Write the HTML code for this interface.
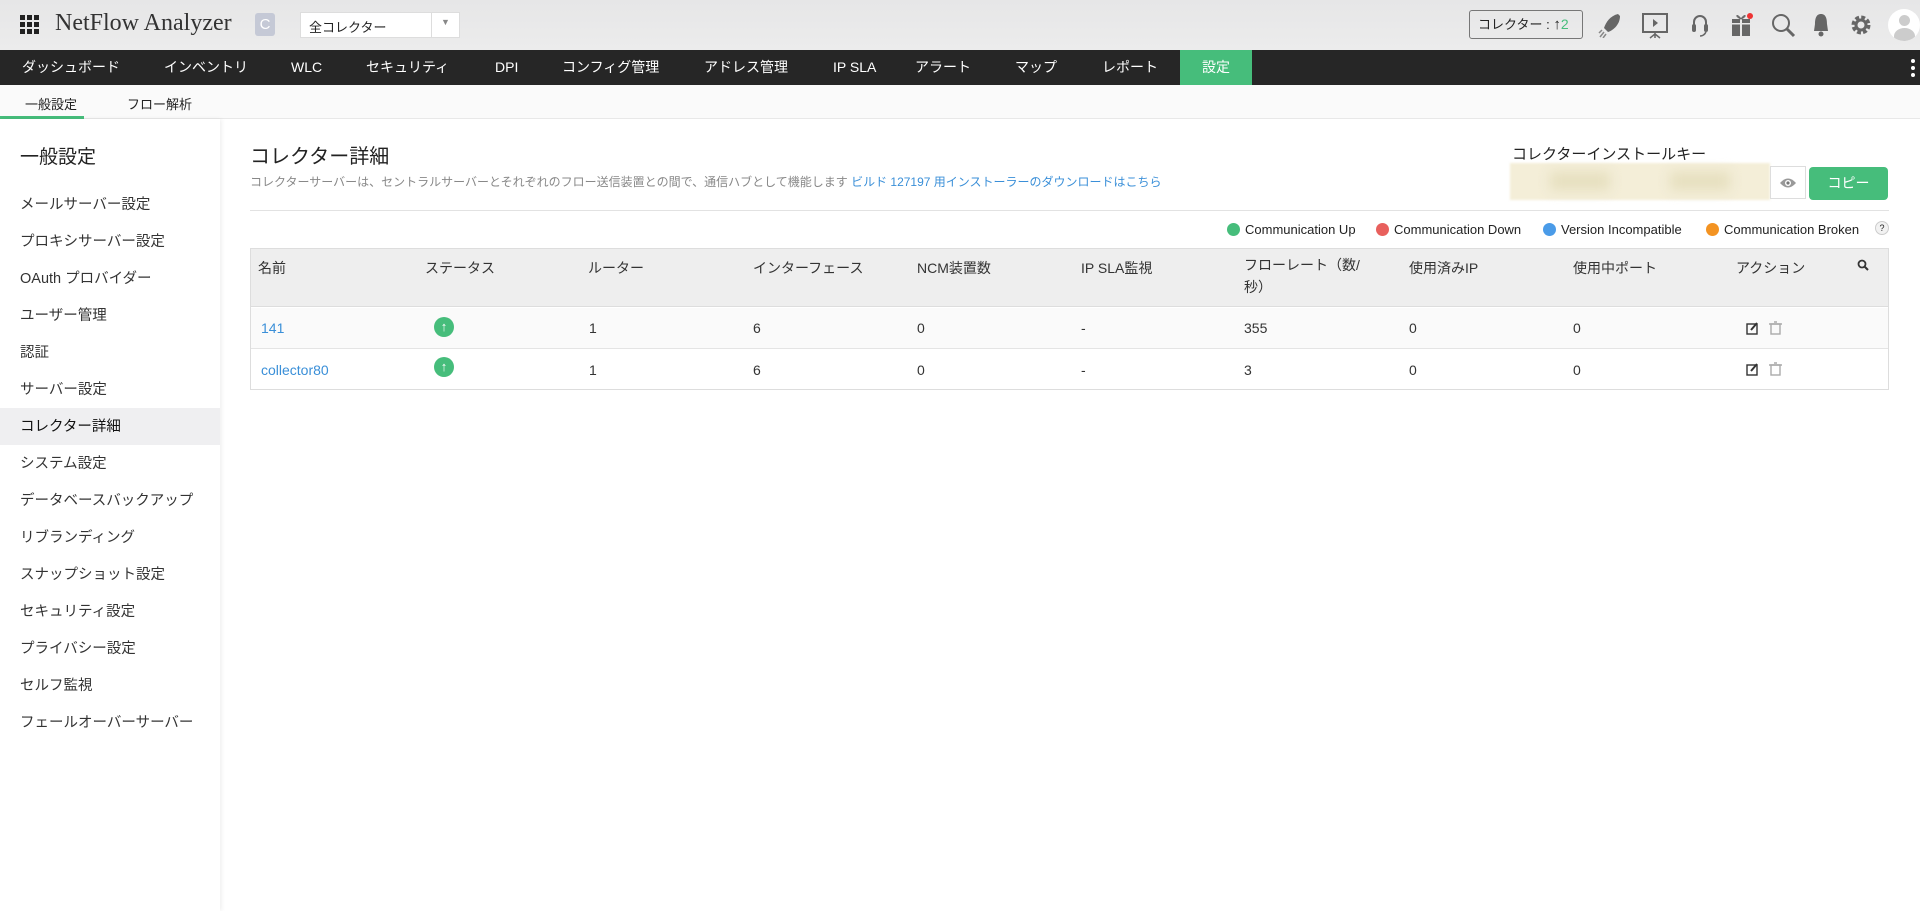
<!DOCTYPE html>
<html><head><meta charset="utf-8"><style>
*{box-sizing:border-box;margin:0;padding:0}
body{width:1920px;height:911px;overflow:hidden;background:#fff;font-family:"Liberation Sans","Noto Sans CJK JP",sans-serif;color:#222;position:relative}
.abs{position:absolute}
#top{left:0;top:0;width:1920px;height:50px;background:linear-gradient(#e6e6e7,#ececec)}
#nav{left:0;top:50px;width:1920px;height:35px;background:#262626}
#nav span{position:absolute;top:0;line-height:35px;color:#fff;font-size:14px;white-space:nowrap}
#sub{left:0;top:85px;width:1920px;height:34px;background:#fafafa;border-bottom:1px solid #e8e8e8}
#side{left:0;top:119px;width:220px;height:792px;background:#fff;box-shadow:2px 0 4px rgba(0,0,0,.06)}
.si{position:absolute;left:20px;font-size:14.5px;color:#333;white-space:nowrap}
.th{position:absolute;top:258px;font-size:14px;color:#333;white-space:nowrap}
.td{position:absolute;font-size:14px;color:#333;white-space:nowrap}
.up{position:absolute;width:20px;height:20px;border-radius:50%;background:#46bd7b;color:#fff;font-size:13px;font-weight:bold;text-align:center;line-height:20px}
.lg{position:absolute;top:222px;font-size:13px;color:#222;white-space:nowrap}
.dot{display:inline-block;width:13px;height:13px;border-radius:50%;vertical-align:-2px;margin-right:5px}
</style></head><body>
<div id="top" class="abs">
  <svg class="abs" style="left:20px;top:15px" width="20" height="20"><g fill="#222"><rect x="0" y="0" width="5" height="5"/><rect x="7" y="0" width="5" height="5"/><rect x="14" y="0" width="5" height="5"/><rect x="0" y="7" width="5" height="5"/><rect x="7" y="7" width="5" height="5"/><rect x="14" y="7" width="5" height="5"/><rect x="0" y="14" width="5" height="5"/><rect x="7" y="14" width="5" height="5"/><rect x="14" y="14" width="5" height="5"/></g></svg>
  <div class="abs" style="left:55px;top:10px;font-family:'Liberation Serif',serif;font-size:24px;color:#333">NetFlow Analyzer</div>
  <div class="abs" style="left:255px;top:13px;width:20px;height:23px;background:#c5c9d6;border-radius:3px;color:#fff;text-align:center;line-height:23px;font-size:15px">C</div>
  <div class="abs" style="left:300px;top:12px;width:160px;height:26px;background:#fff;border:1px solid #ddd">
    <span class="abs" style="left:8px;top:4px;font-size:13px">全コレクター</span>
    <span class="abs" style="left:130px;top:0;width:1px;height:24px;background:#ddd"></span>
    <span class="abs" style="left:140px;top:4px;font-size:9px;color:#888">▼</span>
  </div>
  <div class="abs" style="left:1469px;top:10px;width:114px;height:29px;border:1px solid #777;border-radius:3px;font-size:13px;line-height:27px;padding-left:8px;white-space:nowrap">コレクター : <b style="font-size:15px">↑</b><span style="color:#46bd7b;font-size:14px">2</span></div>
  <svg class="abs" style="left:1598px;top:12px" width="24" height="26"><path d="M20 2 C12 4 8 10 6 16 L10 20 C16 18 22 12 22 4Z" fill="#666"/><path d="M6 20 L2 25 M8 22 L5 26 M4 18 L1 21" stroke="#888" stroke-width="1.5"/></svg>
  <svg class="abs" style="left:1641px;top:12px" width="28" height="28"><rect x="2" y="2" width="24" height="18" fill="none" stroke="#666" stroke-width="2"/><path d="M12 7 L17 11 L12 15Z" fill="#666"/><path d="M14 20 V26 M9 26 L14 22 L19 26" stroke="#666" stroke-width="1.5" fill="none"/></svg>
  <svg class="abs" style="left:1690px;top:12px" width="20" height="26"><path d="M4 14 V10 A6 6 0 0 1 16 10 V14" fill="none" stroke="#666" stroke-width="2"/><rect x="2" y="12" width="4" height="8" rx="2" fill="#666"/><rect x="14" y="12" width="4" height="8" rx="2" fill="#666"/><path d="M16 20 Q14 24 10 24" stroke="#666" stroke-width="1.5" fill="none"/></svg>
  <svg class="abs" style="left:1729px;top:10px" width="24" height="28"><rect x="3" y="9" width="18" height="17" fill="#666"/><rect x="11" y="9" width="2" height="17" fill="#e8e8e8"/><rect x="3" y="13" width="18" height="1.5" fill="#e8e8e8"/><path d="M12 9 C8 3 5 6 12 9 C16 3 19 6 12 9" stroke="#666" fill="none"/><circle cx="21" cy="6" r="3" fill="#e33"/></svg>
  <svg class="abs" style="left:1770px;top:12px" width="26" height="26"><circle cx="11" cy="11" r="8" fill="none" stroke="#666" stroke-width="2"/><path d="M17 17 L24 24" stroke="#666" stroke-width="3"/></svg>
  <svg class="abs" style="left:1811px;top:12px" width="20" height="26"><path d="M10 2 C5 2 4 7 4 12 L3 19 H17 L16 12 C16 7 15 2 10 2Z" fill="#666"/><circle cx="10" cy="22" r="2.5" fill="#666"/></svg>
  <svg class="abs" style="left:1849px;top:13px" width="24" height="24"><circle cx="12" cy="12" r="7" fill="none" stroke="#666" stroke-width="5" stroke-dasharray="3.5 2"/><circle cx="12" cy="12" r="5" fill="none" stroke="#666" stroke-width="3"/></svg>
  <div class="abs" style="left:1888px;top:9px;width:32px;height:32px;border-radius:50%;background:#fff;overflow:hidden"><div class="abs" style="left:11px;top:6px;width:11px;height:11px;border-radius:50%;background:#ccc"></div><div class="abs" style="left:6px;top:19px;width:21px;height:16px;border-radius:50% 50% 0 0;background:#ccc"></div></div>
</div>
<div id="nav" class="abs">
  <span style="left:22px">ダッシュボード</span><span style="left:164px">インベントリ</span><span style="left:291px">WLC</span><span style="left:366px">セキュリティ</span><span style="left:495px">DPI</span><span style="left:562px">コンフィグ管理</span><span style="left:704px">アドレス管理</span><span style="left:833px">IP SLA</span><span style="left:915px">アラート</span><span style="left:1015px">マップ</span><span style="left:1102px">レポート</span>
  <span style="left:1180px;width:72px;background:#46bd7b;text-align:center">設定</span>
  <span style="left:1911px;width:5px;top:9px;line-height:0"><i style="display:block;width:4px;height:4px;border-radius:50%;background:#fff;margin-bottom:3px"></i><i style="display:block;width:4px;height:4px;border-radius:50%;background:#fff;margin-bottom:3px"></i><i style="display:block;width:4px;height:4px;border-radius:50%;background:#fff"></i></span>
</div>
<div id="sub" class="abs">
  <span class="abs" style="left:25px;top:9px;font-size:13px">一般設定</span>
  <span class="abs" style="left:127px;top:9px;font-size:13px">フロー解析</span>
  <span class="abs" style="left:0;top:31px;width:84px;height:3px;background:#46bd7b"></span>
</div>
<div id="side" class="abs">
  <div class="si" style="top:23px;font-size:19px;color:#222">一般設定</div>
  <div class="si" style="top:74px">メールサーバー設定</div>
  <div class="si" style="top:111px">プロキシサーバー設定</div>
  <div class="si" style="top:148px">OAuth プロバイダー</div>
  <div class="si" style="top:185px">ユーザー管理</div>
  <div class="si" style="top:222px">認証</div>
  <div class="si" style="top:259px">サーバー設定</div>
  <div class="abs" style="left:0;top:289px;width:220px;height:37px;background:#efeff1"></div>
  <div class="si" style="top:296px;color:#111">コレクター詳細</div>
  <div class="si" style="top:333px">システム設定</div>
  <div class="si" style="top:370px">データベースバックアップ</div>
  <div class="si" style="top:407px">リブランディング</div>
  <div class="si" style="top:444px">スナップショット設定</div>
  <div class="si" style="top:481px">セキュリティ設定</div>
  <div class="si" style="top:518px">プライバシー設定</div>
  <div class="si" style="top:555px">セルフ監視</div>
  <div class="si" style="top:592px">フェールオーバーサーバー</div>
</div>
<div class="abs" style="left:250px;top:140px;font-size:20px;color:#222">コレクター詳細</div>
<div class="abs" style="left:250px;top:173px;font-size:12px;color:#888;white-space:nowrap">コレクターサーバーは、セントラルサーバーとそれぞれのフロー送信装置との間で、通信ハブとして機能します <span style="color:#3a8fd8">ビルド 127197 用インストーラーのダウンロードはこちら</span></div>
<div class="abs" style="left:1512px;top:143px;font-size:15px;color:#222">コレクターインストールキー</div>
<div class="abs" style="left:1510px;top:163px;width:260px;height:37px;background:#f4eed8;filter:blur(1px)"></div>
<div class="abs" style="left:1550px;top:172px;width:60px;height:18px;background:#e6dfbf;filter:blur(6px)"></div>
<div class="abs" style="left:1670px;top:172px;width:60px;height:18px;background:#e6dfbf;filter:blur(6px)"></div>
<div class="abs" style="left:1770px;top:166px;width:36px;height:33px;background:#fff;border:1px solid #ddd"><svg class="abs" style="left:8px;top:9px" width="18" height="14"><path d="M1 7 Q9 -2 17 7 Q9 16 1 7Z" fill="#999"/><circle cx="9" cy="7" r="3" fill="#fff"/><circle cx="9" cy="7" r="1.6" fill="#777"/></svg></div>
<div class="abs" style="left:1809px;top:167px;width:79px;height:33px;background:#46bd7b;border-radius:4px;color:#fff;text-align:center;line-height:33px;font-size:14px">コピー</div>
<div class="abs" style="left:250px;top:210px;width:1639px;height:1px;background:#e2e2e2"></div>
<div class="lg" style="left:1227px"><span class="dot" style="background:#46bd7b"></span>Communication Up</div>
<div class="lg" style="left:1376px"><span class="dot" style="background:#e8605d"></span>Communication Down</div>
<div class="lg" style="left:1543px"><span class="dot" style="background:#4a9be8"></span>Version Incompatible</div>
<div class="lg" style="left:1706px"><span class="dot" style="background:#f39322"></span>Communication Broken</div>
<div class="abs" style="left:1875px;top:221px;width:14px;height:14px;border-radius:50%;border:1px solid #ccc;background:#f2f2f2;font-size:9px;text-align:center;line-height:12px">?</div>
<div class="abs" style="left:250px;top:248px;width:1639px;height:142px;border:1px solid #ddd"></div>
<div class="abs" style="left:251px;top:249px;width:1637px;height:58px;background:#eeeeee;border-bottom:1px solid #ddd"></div>
<div class="abs" style="left:251px;top:308px;width:1637px;height:41px;background:#fafafa;border-bottom:1px solid #e4e4e4"></div>
<div class="th" style="left:258px">名前</div><div class="th" style="left:425px">ステータス</div><div class="th" style="left:588px">ルーター</div><div class="th" style="left:753px">インターフェース</div><div class="th" style="left:917px">NCM装置数</div><div class="th" style="left:1081px">IP SLA監視</div><div class="th" style="left:1244px;line-height:22px;top:254px">フローレート（数/<br>秒）</div><div class="th" style="left:1409px">使用済みIP</div><div class="th" style="left:1573px">使用中ポート</div><div class="th" style="left:1736px">アクション</div>
<svg class="abs" style="left:1857px;top:259px" width="12" height="12"><circle cx="5" cy="5" r="3.5" fill="none" stroke="#333" stroke-width="1.8"/><path d="M7.5 7.5 L11 11" stroke="#333" stroke-width="2"/></svg>
<div class="td" style="left:261px;top:320px;color:#3a8fd8">141</div>
<div class="up" style="left:434px;top:317px">↑</div>
<div class="td" style="left:589px;top:320px">1</div><div class="td" style="left:753px;top:320px">6</div><div class="td" style="left:917px;top:320px">0</div><div class="td" style="left:1081px;top:320px">-</div><div class="td" style="left:1244px;top:320px">355</div><div class="td" style="left:1409px;top:320px">0</div><div class="td" style="left:1573px;top:320px">0</div>
<div class="td" style="left:261px;top:362px;color:#3a8fd8">collector80</div>
<div class="up" style="left:434px;top:357px">↑</div>
<div class="td" style="left:589px;top:362px">1</div><div class="td" style="left:753px;top:362px">6</div><div class="td" style="left:917px;top:362px">0</div><div class="td" style="left:1081px;top:362px">-</div><div class="td" style="left:1244px;top:362px">3</div><div class="td" style="left:1409px;top:362px">0</div><div class="td" style="left:1573px;top:362px">0</div>
<svg class="abs" style="left:1746px;top:321px" width="40" height="14"><rect x="1" y="3" width="10" height="10" fill="none" stroke="#333" stroke-width="1.4"/><path d="M5 9 L11 2" stroke="#333" stroke-width="2"/><rect x="25" y="3" width="9" height="10" fill="none" stroke="#aaa" stroke-width="1.4"/><path d="M23 3 H36 M28 1 H31" stroke="#aaa" stroke-width="1.4"/></svg>
<svg class="abs" style="left:1746px;top:362px" width="40" height="14"><rect x="1" y="3" width="10" height="10" fill="none" stroke="#333" stroke-width="1.4"/><path d="M5 9 L11 2" stroke="#333" stroke-width="2"/><rect x="25" y="3" width="9" height="10" fill="none" stroke="#aaa" stroke-width="1.4"/><path d="M23 3 H36 M28 1 H31" stroke="#aaa" stroke-width="1.4"/></svg>
</body></html>
